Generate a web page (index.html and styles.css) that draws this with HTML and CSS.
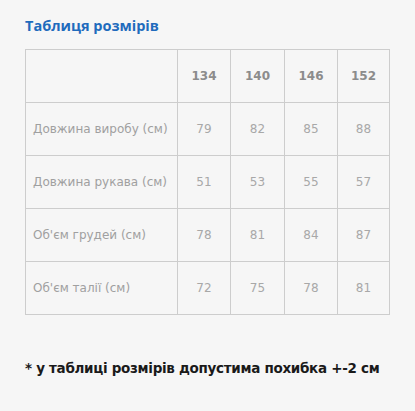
FILE: index.html
```html
<!DOCTYPE html>
<html lang="uk">
<head>
<meta charset="utf-8">
<link rel="stylesheet" href="styles.css">
</head>
<body>
<div class="page">
  <h2 class="title">Таблиця розмірів</h2>
  <table class="sizes">
    <colgroup>
      <col class="c-label"><col class="c-a"><col class="c-b"><col class="c-a"><col class="c-c">
    </colgroup>
    <tr class="head">
      <td class="label"></td><td>134</td><td>140</td><td>146</td><td>152</td>
    </tr>
    <tr><td class="label">Довжина виробу (см)</td><td>79</td><td>82</td><td>85</td><td>88</td></tr>
    <tr><td class="label">Довжина рукава (см)</td><td>51</td><td>53</td><td>55</td><td>57</td></tr>
    <tr><td class="label">Об'єм грудей (см)</td><td>78</td><td>81</td><td>84</td><td>87</td></tr>
    <tr><td class="label">Об'єм талії (см)</td><td>72</td><td>75</td><td>78</td><td>81</td></tr>
  </table>
  <p class="note">* у таблиці розмірів допустима похибка +-2 см</p>
</div>
</body>
</html>
```

FILE: styles.css
```css
html, body {
  margin: 0;
  padding: 0;
  background: #f6f6f6;
}
.page {
  padding: 16px 25px 0 25px;
  font-family: "DejaVu Sans", sans-serif;
}
.title {
  margin: 0;
  font-family: "Open Sans", "DejaVu Sans", sans-serif;
  font-size: 14.5px;
  line-height: 20px;
  font-weight: bold;
  color: #1f6bbd;
}
.sizes {
  margin-top: 13px;
  border-collapse: collapse;
  width: 364px;
  table-layout: fixed;
}
.c-label { width: 152px; }
.c-a { width: 53px; }
.c-b { width: 54px; }
.c-c { width: 52px; }
.sizes td {
  border: 1px solid #cdcdcd;
  height: 52px;
  padding: 0;
  text-align: center;
  font-size: 12px;
  color: #a8a8a8;
}
.sizes td.label {
  text-align: left;
  padding-left: 7px;
  color: #a0a0a0;
}
.head td {
  font-weight: bold;
  color: #8c8c8c;
  font-size: 12px;
}
.note {
  margin: 45px 0 0 0;
  font-size: 13.5px;
  font-weight: bold;
  color: #1a1a1a;
  letter-spacing: -0.3px;
  white-space: nowrap;
}
```
